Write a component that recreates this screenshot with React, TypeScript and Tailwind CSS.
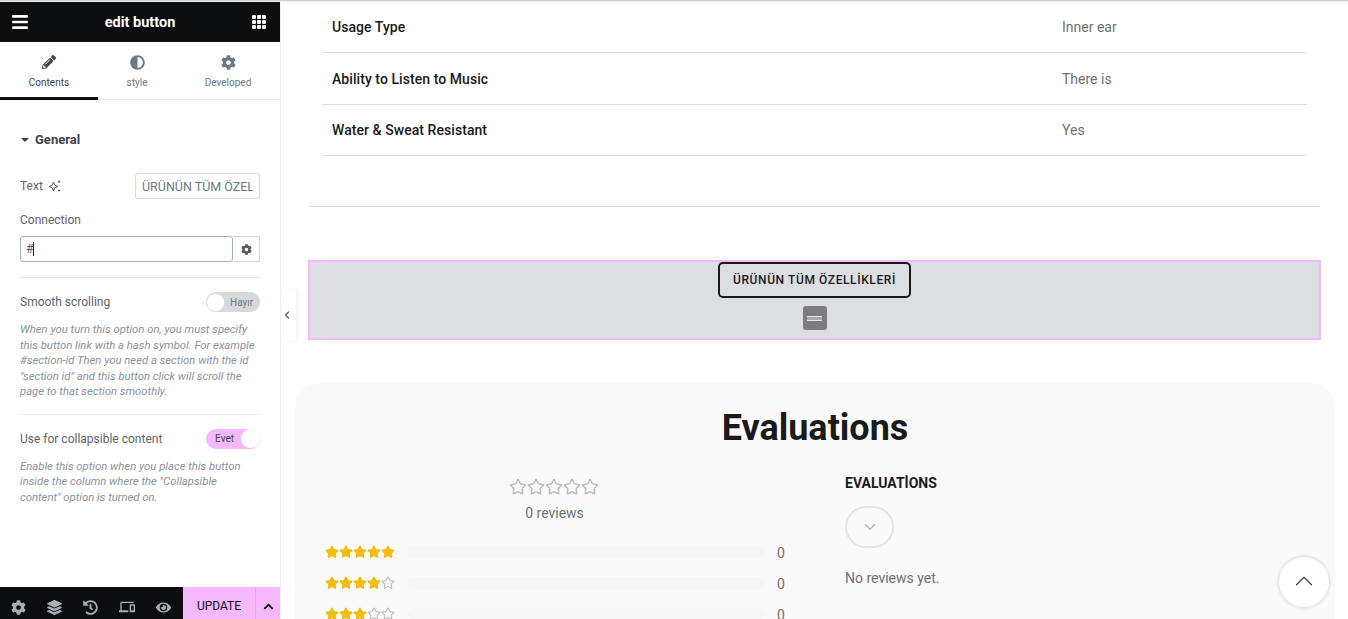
import { ChevronUp, ChevronDown, ChevronLeft, Star } from 'lucide-react';
import { FaBars, FaPencilAlt, FaAdjust, FaCog, FaLayerGroup, FaHistory, FaEye, FaChevronUp } from 'react-icons/fa';
import { BsGrid3X3GapFill } from 'react-icons/bs';
import { MdDevices } from 'react-icons/md';

const specs = [
  { label: 'Usage Type', value: 'Inner ear', height: 'h-[51px] pt-[1px]' },
  { label: 'Ability to Listen to Music', value: 'There is', height: 'h-[52px] pt-[1px]' },
  { label: 'Water & Sweat Resistant', value: 'Yes', height: 'h-[51px]' },
];

const ratings = [5, 4, 3];

function Stars({ filled, size }: { filled: number; size: string }) {
  return (
    <div className="flex">
      {[0, 1, 2, 3, 4].map((i) =>
        i < filled ? (
          <Star key={i} className={`${size} text-[#f0bd12] fill-[#f0bd12]`} strokeWidth={2} />
        ) : (
          <Star key={i} className={`${size} text-[#bdbdbd]`} strokeWidth={2} />
        ),
      )}
    </div>
  );
}

function Sidebar() {
  return (
    <aside className="relative w-[280px] shrink-0 h-full bg-white flex flex-col text-[#5f6367]">
      {/* Header */}
      <div className="h-10 shrink-0 bg-[#0c0d0e] text-white flex items-center justify-between pl-[11px] pr-[13px]">
        <FaBars className="w-[18px] h-[18px]" />
        <span className="text-[14.5px] font-bold pt-[2px]">edit button</span>
        <BsGrid3X3GapFill className="w-[16px] h-[16px]" />
      </div>

      {/* Tabs */}
      <div className="h-[58px] shrink-0 flex border-b border-[#e6e8ea]">
        <div className="w-[98px] border-b-[3px] border-[#0c0d0e] flex flex-col items-center pt-[13px] -mb-px">
          <FaPencilAlt className="w-[14px] h-[14px] text-[#3f444b]" />
          <span className="text-[10px] mt-[6px] text-[#3f444b]">Contents</span>
        </div>
        <div className="w-[78px] flex flex-col items-center pt-[13px]">
          <FaAdjust className="w-[15px] h-[15px] text-[#6d7882]" />
          <span className="text-[10px] mt-[5px] text-[#6d7882]">style</span>
        </div>
        <div className="flex-1 flex flex-col items-center pt-[13px]">
          <FaCog className="w-[15px] h-[15px] text-[#6d7882]" />
          <span className="text-[10px] mt-[5px] text-[#6d7882]">Developed</span>
        </div>
      </div>

      {/* Controls */}
      <div className="flex-1 px-5 min-h-0">
        <div className="flex items-center mt-[32px] h-4">
          <span className="w-0 h-0 border-x-[4px] border-x-transparent border-t-[4px] border-t-[#3f444b] ml-[1px] mr-[6px]" />
          <span className="text-[13px] font-bold text-[#3f444b]">General</span>
        </div>

        <div className="flex items-center justify-between mt-[25px] h-[26px]">
          <span className="text-[12px] flex items-center gap-[5px]">
            Text
            <svg viewBox="0 0 14 14" className="w-[14px] h-[14px]" fill="none" stroke="#55595c" strokeWidth="1">
              <path d="M5.5 3 L6.8 6.2 L10 7.5 L6.8 8.8 L5.5 12 L4.2 8.8 L1 7.5 L4.2 6.2 Z" />
              <path d="M11 1.5v2.5M9.8 2.7h2.4M11 10.5v2M10 11.5h2" />
            </svg>
          </span>
          <input
            readOnly
            value="ÜRÜNÜN TÜM ÖZELLİKLERİ"
            className="w-[125px] h-[26px] border border-[#d5d8dc] rounded-[3px] text-[12.5px] px-[6px] text-[#6d7882] outline-none"
          />
        </div>

        <div className="text-[12px] mt-[14px] leading-[14px]">Connection</div>
        <div className="flex mt-[9px] h-[26px]">
          <div className="flex-1 border border-[#a4afb7] rounded-[3px] text-[12px] pl-[5px] flex items-center text-[#55595c]">
            #<span className="w-px h-[14px] bg-[#222]" />
          </div>
          <div className="w-[27px] border border-l-0 border-[#d5d8dc] flex items-center justify-center">
            <FaCog className="w-[11px] h-[11px] text-[#55595c]" />
          </div>
        </div>

        <div className="h-px bg-[#e6e8ea] mt-[15px]" />

        <div className="flex items-center justify-between mt-[14px] h-5">
          <span className="text-[12px]">Smooth scrolling</span>
          <div className="w-[54px] h-5 rounded-full bg-[#d5d8dc] flex items-center">
            <span className="w-[19px] h-[19px] rounded-full bg-white border border-[#e0e0e0]" />
            <span className="text-[10px] ml-[5px] text-[#6d7882]">Hayır</span>
          </div>
        </div>
        <p className="text-[11.3px] italic leading-[15.5px] text-[#8a929a] mt-[10px] whitespace-nowrap">
          When you turn this option on, you must specify
          <br />
          this button link with a hash symbol. For example
          <br />
          #section-id Then you need a section with the id
          <br />
          "section id" and this button click will scroll the
          <br />
          page to that section smoothly.
        </p>

        <div className="h-px bg-[#e6e8ea] mt-[14px]" />

        <div className="flex items-center justify-between mt-[14px] h-5">
          <span className="text-[12px]">Use for collapsible content</span>
          <div className="w-[54px] h-5 rounded-full bg-[#f4b8fb] flex items-center justify-end">
            <span className="text-[10px] mr-[7px] text-[#3f444b]">Evet</span>
            <span className="w-[19px] h-[19px] rounded-full bg-white" />
          </div>
        </div>
        <p className="text-[11.3px] italic leading-[15.5px] text-[#8a929a] mt-[10px] whitespace-nowrap">
          Enable this option when you place this button
          <br />
          inside the column where the "Collapsible
          <br />
          content" option is turned on.
        </p>
      </div>

      <div className="h-8 shrink-0 flex">
        <div className="w-[183px] bg-[#0c0d0e] flex items-center text-[#a4afb7] pl-[11px] pt-[8px] gap-[21px]">
          <FaCog className="w-[15px] h-[15px]" />
          <FaLayerGroup className="w-[15px] h-[15px]" />
          <FaHistory className="w-[15px] h-[15px]" />
          <MdDevices className="w-[16px] h-[16px]" />
          <FaEye className="w-[15px] h-[15px]" />
        </div>
        <div className="w-[72px] bg-[#f4b8fb] text-[#0c0d0e] text-[12px] pt-[6px] flex items-center justify-center">UPDATE</div>
        <div className="flex-1 bg-[#f4b8fb] border-l border-[#e0a6e8] pt-[6px] flex items-center justify-center">
          <FaChevronUp className="w-[11px] h-[11px] text-[#0c0d0e]" />
        </div>
      </div>

      {/* Collapse handle */}
      <div className="absolute left-full top-[288px] w-4 h-[50px] bg-white shadow-[2px_0_4px_rgba(0,0,0,0.05)] flex items-center justify-center pr-[2px]">
        <ChevronLeft className="w-3 h-3 text-[#55595c]" strokeWidth={2.5} />
      </div>
    </aside>
  );
}

export default function App() {
  return (
    <div className="h-[619px] w-[1348px] overflow-hidden bg-white flex flex-col font-['Roboto',sans-serif]">
      <div className="h-[2px] shrink-0 bg-[linear-gradient(#cfcfcf_50%,#f0f0f0_50%)]" />
      <div className="flex-1 min-h-0 flex relative">
        <Sidebar />

        <main className="flex-1 min-w-0 relative overflow-hidden border-l border-[#f1f1f1]">
          {/* Spec table */}
          <div className="ml-[41px] w-[985px]">
            {specs.map((row) => (
              <div key={row.label} className={`${row.height} flex items-center border-b border-[#dfdfdf] text-[14px]`}>
                <span className="w-[740px] pl-[10px] font-medium tracking-[0.06px] text-[#1a1a1a]">{row.label}</span>
                <span className="text-[#707070]">{row.value}</span>
              </div>
            ))}
          </div>

          <div className="h-px bg-[#dfdfdf] ml-[28px] w-[1011px] mt-[50px]" />

          {/* Selected section */}
          <div className="ml-[27px] w-[1013px] h-[80px] mt-[53px] bg-[#dddee2] border-2 border-[#f4b8fb] flex flex-col items-center">
            <div className="h-9 w-[193px] border-2 border-[#1a1a1a] rounded-[5px] flex items-center justify-center text-[12px] font-medium tracking-[0.6px] text-[#1a1a1a] whitespace-nowrap">
              ÜRÜNÜN TÜM ÖZELLİKLERİ
            </div>
            <div className="w-6 h-6 mt-2 rounded-[3px] bg-[#7c7c7e] flex items-center justify-center">
              <div className="w-[15px] h-[5px] bg-[#a8a8aa] border-y border-[#e8e8e8]" />
            </div>
          </div>

          {/* Evaluations card */}
          <section className="ml-[14px] w-[1040px] mt-[43px] h-[300px] rounded-[24px] bg-[#fafafa]">
            <h2 className="text-[36px] font-bold text-center text-[#1a1a1a] pt-[21px] leading-[48px]">Evaluations</h2>
            <div className="flex mt-[22px]">
              <div className="w-[550px] shrink-0 pt-[4px]">
                <div className="flex flex-col items-center pr-[32px]">
                  <Stars filled={0} size="w-[18px] h-[18px]" />
                  <span className="text-[14px] text-[#707070] mt-[7px] pl-[1px]">0 reviews</span>
                </div>
                <div className="mt-[19px] pl-[30px] flex flex-col gap-[14px]">
                  {ratings.map((n) => (
                    <div key={n} className="flex items-center h-[17px]">
                      <Stars filled={n} size="w-[14px] h-[14px]" />
                      <div className="ml-[12px] w-[358px] h-[12px] rounded-full bg-[#f6f6f6] mt-[1px]" />
                      <span className="ml-[12px] text-[14px] text-[#707070] pt-[4px]">0</span>
                    </div>
                  ))}
                </div>
              </div>
              <div className="-mt-px">
                <h3 className="text-[14px] font-bold text-[#1a1a1a]">EVALUATİONS</h3>
                <div className="mt-[12px] w-[49px] h-[42px] rounded-[21px] border-2 border-[#e4e4e4] flex items-center justify-center">
                  <ChevronDown className="w-[18px] h-[18px] text-[#b5b5b5]" />
                </div>
                <p className="text-[14px] text-[#707070] mt-[20px]">No reviews yet.</p>
              </div>
            </div>
          </section>

          {/* Back to top */}
          <div className="absolute left-[998px] top-[555px] w-[50px] h-[50px] rounded-full bg-white shadow-[0_0_4px_rgba(0,0,0,0.2)] flex items-center justify-center pb-[2px]">
            <ChevronUp className="w-[30px] h-[30px] text-[#444]" strokeWidth={1} />
          </div>
        </main>
      </div>
    </div>
  );
}
